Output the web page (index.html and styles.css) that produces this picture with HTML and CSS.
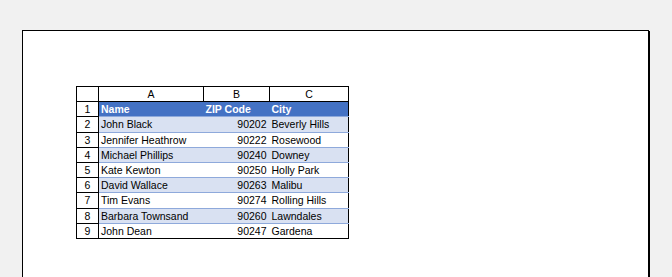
FILE: index.html
```html
<!DOCTYPE html>
<html>
  <head>
    <title>Sheet1</title>
    <link rel="stylesheet" href="styles.css">
  </head>
  <body>
    <div class="page">
      <table class="sheet">
        <tr class="col_heads">
          <th class="corner"></th>
          <th class="col_a">A</th>
          <th class="col_b">B</th>
          <th class="col_c">C</th>
        </tr>
        <tr class="head">
          <td class="num">1</td>
          <td>Name</td>
          <td>ZIP Code</td>
          <td>City</td>
        </tr>
        <tr class="band">
          <td class="num">2</td>
          <td>John Black</td>
          <td class="zip">90202</td>
          <td>Beverly Hills</td>
        </tr>
        <tr>
          <td class="num">3</td>
          <td>Jennifer Heathrow</td>
          <td class="zip">90222</td>
          <td>Rosewood</td>
        </tr>
        <tr class="band">
          <td class="num">4</td>
          <td>Michael Phillips</td>
          <td class="zip">90240</td>
          <td>Downey</td>
        </tr>
        <tr>
          <td class="num">5</td>
          <td>Kate Kewton</td>
          <td class="zip">90250</td>
          <td>Holly Park</td>
        </tr>
        <tr class="band">
          <td class="num">6</td>
          <td>David Wallace</td>
          <td class="zip">90263</td>
          <td>Malibu</td>
        </tr>
        <tr>
          <td class="num">7</td>
          <td>Tim Evans</td>
          <td class="zip">90274</td>
          <td>Rolling Hills</td>
        </tr>
        <tr class="band">
          <td class="num">8</td>
          <td>Barbara Townsand</td>
          <td class="zip">90260</td>
          <td>Lawndales</td>
        </tr>
        <tr class="last">
          <td class="num">9</td>
          <td>John Dean</td>
          <td class="zip">90247</td>
          <td>Gardena</td>
        </tr>
      </table>
    </div>
  </body>
</html>
```

FILE: styles.css
```css
body
{
  margin: 0;
  padding: 30px 0 0 22px;
  background: #f1f1f1;
  font-family: "Liberation Sans", Arial, sans-serif;
  overflow: hidden;
}
.page
{
  width: 572px;
  height: 192px;
  background: #fff;
  border: 1px solid #000;
  box-shadow: 1px 1px 0 #000;
  padding: 55px 0 0 53px;
  box-sizing: content-box;
}
.sheet
{
  border-collapse: collapse;
  table-layout: fixed;
  font-size: 10.5px;
  color: #000;
  border: 1px solid #000;
}
.sheet th,
.sheet td
{
  height: 14.2px;
  padding: 0 2px;
  white-space: nowrap;
  overflow: hidden;
  line-height: 14px;
}
.sheet th
{
  font-weight: normal;
  text-align: center;
  border: 1px solid #000;
}
.corner { width: 17px; }
.col_a { width: 100px; }
.col_b { width: 61px; }
.col_c { width: 74px; }
.sheet td
{
  text-align: left;
  border-top: 1px solid #8ea9db;
}
.sheet td.num
{
  text-align: center;
  border: 1px solid #000;
}
.sheet td.zip
{
  text-align: right;
  padding-right: 3px;
}
.head td
{
  background: #4472c4;
  color: #fff;
  font-weight: bold;
  border-top: 1px solid #000;
}
.head td.num
{
  background: #fff;
  color: #000;
  font-weight: normal;
}
.band td
{
  background: #d9e1f2;
}
.band td.num
{
  background: #fff;
}
```
